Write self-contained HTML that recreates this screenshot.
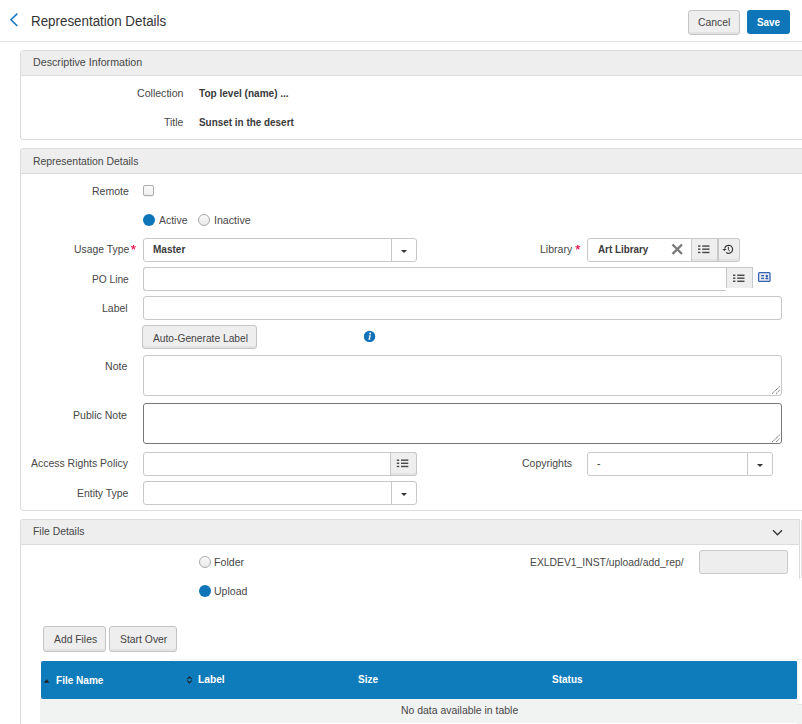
<!DOCTYPE html>
<html><head><meta charset="utf-8">
<style>
html,body{margin:0;padding:0;background:#fff;width:802px;height:724px;overflow:hidden;position:relative;font-family:"Liberation Sans",sans-serif}
.a{position:absolute;box-sizing:border-box}
.t{position:absolute;font-size:11.5px;line-height:14px;color:#474747;white-space:nowrap;transform-origin:0 0}
.r{text-align:right}
.b{font-weight:bold;font-size:11px;letter-spacing:-0.5px;color:#3a3a3a}
.ph{background:#eeeeee;border-bottom:1px solid #dcdcdc}
.pn{border:1px solid #dcdcdc;border-radius:3px;background:#fff}
.in{border:1px solid #c8c8c8;border-radius:3px;background:#fff}
.btn{border:1px solid #c4c4c4;border-radius:3px;background:#eeeeee;box-shadow:inset 0 -2px 0 #e3e3e3}
.star{color:#e8003a}
.car{position:absolute;width:0;height:0;border-left:3px solid transparent;border-right:3px solid transparent;border-top:3px solid #333}
</style></head>
<body>
<!-- header -->
<svg class="a" style="left:0;top:0" width="30" height="40"><polyline points="17.3,13.6 11,19.8 17.3,26" fill="none" stroke="#1979c2" stroke-width="1.6"/></svg>
<div class="a btn" style="left:688px;top:10px;width:52px;height:25px"></div>
<div class="a" style="left:747px;top:10px;width:43px;height:24px;background:#0e76b8;border-radius:3px"></div>
<div class="a" style="left:0;top:41px;width:802px;height:1px;background:#e3e3e3"></div>

<!-- panel 1 -->
<div class="a pn" style="left:20px;top:50px;width:800px;height:90px"></div>
<div class="a ph" style="left:21px;top:51px;width:800px;height:25px;border-radius:2px 0 0 0"></div>

<!-- panel 2 -->
<div class="a pn" style="left:20px;top:148px;width:800px;height:363px"></div>
<div class="a ph" style="left:21px;top:149px;width:800px;height:25px;border-radius:2px 0 0 0"></div>

<div class="a" style="left:143px;top:185px;width:11px;height:11px;border:1px solid #adadad;border-radius:2px;background:linear-gradient(#fafafa,#efefef);box-shadow:0 1px 1px rgba(0,0,0,0.07)"></div>

<div class="a" style="left:143px;top:214px;width:12px;height:12px;border-radius:50%;background:#0e76b8"></div>
<div class="a" style="left:198px;top:214px;width:12px;height:12px;border-radius:50%;border:1px solid #aaa;background:linear-gradient(#fafafa,#e8e8e8)"></div>

<div class="a in" style="left:143px;top:238px;width:274px;height:24px"></div>
<div class="a" style="left:391px;top:238px;width:1px;height:24px;background:#c8c8c8"></div>
<div class="car" style="left:401px;top:250px"></div>

<div class="a in" style="left:587px;top:238px;width:153px;height:24px"></div>
<svg class="a" style="left:671px;top:243px" width="13" height="13"><path d="M1.5,1.5 L11,11 M11,1.5 L1.5,11" stroke="#7a7a7a" stroke-width="2.4"/></svg>
<div class="a" style="left:691px;top:238px;width:49px;height:24px;background:#eeeeee;border:1px solid #c8c8c8;border-radius:0 3px 3px 0;box-shadow:inset 0 -2px 0 #e3e3e3"></div>
<div class="a" style="left:717px;top:239px;width:2px;height:22px;background:#c8c8c8"></div>

<div class="a" style="left:143px;top:267px;width:610px;height:24px;border:1px solid #c8c8c8;border-radius:3px 3px 0 3px;border-right:none"></div>
<div class="a" style="left:726px;top:267px;width:27px;height:21px;background:#eeeeee;border:1px solid #c8c8c8;border-bottom:none"></div>
<div class="a" style="left:726px;top:288px;width:27px;height:4px;background:#fff"></div>

<div class="a in" style="left:143px;top:296px;width:639px;height:24px"></div>

<div class="a btn" style="left:142px;top:325px;width:115px;height:24px"></div>
<div class="a" style="left:364px;top:331px;width:11px;height:11px;border-radius:50%;background:#1272b8"></div>

<div class="a in" style="left:143px;top:355px;width:639px;height:41px"></div>
<div class="a in" style="left:143px;top:403px;width:639px;height:41px;border-color:#777"></div>

<div class="a in" style="left:143px;top:452px;width:274px;height:24px"></div>
<div class="a" style="left:390px;top:452px;width:27px;height:24px;background:#eeeeee;border:1px solid #c8c8c8;border-radius:0 3px 3px 0;box-shadow:inset 0 -2px 0 #e3e3e3"></div>

<div class="a in" style="left:587px;top:452px;width:186px;height:24px"></div>
<div class="a" style="left:747px;top:452px;width:1px;height:24px;background:#c8c8c8"></div>
<div class="car" style="left:757px;top:464px"></div>

<div class="a in" style="left:143px;top:481px;width:274px;height:24px"></div>
<div class="a" style="left:391px;top:481px;width:1px;height:24px;background:#c8c8c8"></div>
<div class="car" style="left:401px;top:493px"></div>

<svg class="a" style="left:697px;top:243px" width="16" height="14" fill="#4a4a4a"><rect x="1.00" y="2.35" width="2.4" height="1.45"/><rect x="5.20" y="2.35" width="7.3" height="1.45"/><rect x="1.00" y="5.45" width="2.4" height="1.45"/><rect x="5.20" y="5.45" width="7.3" height="1.45"/><rect x="1.00" y="8.75" width="2.4" height="1.45"/><rect x="5.20" y="8.75" width="7.3" height="1.45"/></svg>
<svg class="a" style="left:732px;top:272px" width="16" height="14" fill="#4a4a4a"><rect x="1.00" y="2.55" width="2.4" height="1.45"/><rect x="5.20" y="2.55" width="7.3" height="1.45"/><rect x="1.00" y="5.45" width="2.4" height="1.45"/><rect x="5.20" y="5.45" width="7.3" height="1.45"/><rect x="1.00" y="8.55" width="2.4" height="1.45"/><rect x="5.20" y="8.55" width="7.3" height="1.45"/></svg>
<svg class="a" style="left:395px;top:457px" width="16" height="14" fill="#4a4a4a"><rect x="1.80" y="2.45" width="2.4" height="1.45"/><rect x="6.00" y="2.45" width="7.3" height="1.45"/><rect x="1.80" y="5.55" width="2.4" height="1.45"/><rect x="6.00" y="5.55" width="7.3" height="1.45"/><rect x="1.80" y="8.75" width="2.4" height="1.45"/><rect x="6.00" y="8.75" width="7.3" height="1.45"/></svg>
<svg class="a" style="left:719px;top:241px" width="20" height="18"><path d="M7.2,11.5 A4,4 0 1 0 5.7,7.6" fill="none" stroke="#333" stroke-width="1.15"/><polygon points="3.3,7.9 7.6,7.9 5.45,10.1" fill="#333"/><polyline points="9.4,5.8 9.4,8.9 10.8,10" fill="none" stroke="#333" stroke-width="0.95"/></svg>
<svg class="a" style="left:757px;top:271px" width="15" height="12"><rect x="1.6" y="1.6" width="11.4" height="8.8" rx="1" fill="#e8e8e8" stroke="#3564b8" stroke-width="1.3"/><rect x="4.2" y="4" width="2.8" height="1.2" fill="#3564b8"/><rect x="4.2" y="6.9" width="2.8" height="1.2" fill="#3564b8"/><rect x="4.4" y="5.2" width="2.4" height="1.45" fill="#9aaed8"/><circle cx="9.8" cy="5" r="1.2" fill="#2f62b8"/><rect x="8.4" y="7" width="2.8" height="1.2" fill="#2f62b8"/><rect x="9.4" y="5.5" width="0.9" height="2" fill="#2f62b8"/></svg>
<svg class="a" style="left:362px;top:329px" width="16" height="16"><circle cx="7.6" cy="7.4" r="5.6" fill="#1272b8"/><circle cx="8.2" cy="4.5" r="0.95" fill="#fff"/><path d="M6.9,6.4 L8.9,6.2 L7.9,10.2 L8.5,10.1 L8.3,10.8 L6.4,10.8 L7.2,7.1 L6.8,7.1 Z" fill="#fff"/></svg>
<svg class="a" style="left:760px;top:380px" width="24" height="70" fill="none" stroke="#555" stroke-width="1" stroke-dasharray="1.2,0.6"><path d="M12.1,13.6 L19.8,6.4 M16.2,13.6 L19.8,10"/><path d="M12.1,62 L19.8,54.8 M16.2,62 L19.8,58.4"/></svg>
<svg class="a" style="left:0;top:0" width="600" height="260"><path d="M133.40,247.30 L133.40,245.25 M133.40,247.30 L135.35,246.67 M133.40,247.30 L134.60,248.96 M133.40,247.30 L132.20,248.96 M133.40,247.30 L131.45,246.67 M577.80,247.30 L577.80,245.25 M577.80,247.30 L579.75,246.67 M577.80,247.30 L579.00,248.96 M577.80,247.30 L576.60,248.96 M577.80,247.30 L575.85,246.67 " stroke="#ec1350" stroke-width="1.1" stroke-linecap="round" fill="none"/></svg>
<!-- panel 3 -->
<div class="a pn" style="left:20px;top:519px;width:780px;height:260px;border-bottom:none;border-right:none;border-radius:3px 0 0 0"></div>
<div class="a" style="left:790px;top:519px;width:10px;height:60px;border-top:1px solid #dcdcdc;border-right:1px solid #dcdcdc;border-radius:0 3px 0 0"></div>
<div class="a ph" style="left:21px;top:520px;width:778px;height:25px;border-radius:2px 2px 0 0"></div>
<svg class="a" style="left:770px;top:527px" width="15" height="12"><polyline points="3,3.3 7.5,7.8 12,3.3" fill="none" stroke="#333" stroke-width="1.25"/></svg>

<div class="a" style="left:199px;top:556px;width:12px;height:12px;border-radius:50%;border:1px solid #aaa;background:linear-gradient(#fafafa,#e8e8e8)"></div>
<div class="a" style="left:699px;top:550px;width:89px;height:24px;background:#eeeeee;border:1px solid #c8c8c8;border-radius:3px"></div>
<div class="a" style="left:199px;top:585px;width:12px;height:12px;border-radius:50%;background:#0e76b8"></div>

<div class="a btn" style="left:43px;top:626px;width:63px;height:26px"></div>
<div class="a btn" style="left:109px;top:626px;width:68px;height:26px"></div>

<div class="a" style="left:41px;top:661px;width:756px;height:38px;background:#0e7bbb;border-radius:2px 1px 1px 2px"></div>
<div class="a" style="left:40px;top:699px;width:757px;height:24px;background:#f1f2f2"></div>
<svg class="a" style="left:40px;top:670px" width="160" height="20"><polygon points="3.9,12.7 9.4,12.7 6.65,9.2" fill="#222"/><polyline points="147.2,9.2 149.45,7 151.7,9.2" fill="none" stroke="#222" stroke-width="1.1"/><polyline points="147.2,10.7 149.45,12.9 151.7,10.7" fill="none" stroke="#222" stroke-width="1.1"/></svg>
<div class="a" style="left:171px;top:659px;width:631px;height:1px;background:#f3f3f3"></div>
<div class="a" style="left:801px;top:520px;width:1px;height:58px;background:#e2e2e2"></div>
<div class="a" style="left:797px;top:704px;width:5px;height:20px;background:#f1f2f2;border-top:1px solid #e6e6e6"></div>
<div class="a" style="left:797px;top:660px;width:1px;height:44px;background:#f0f0f0"></div>
<div class="t" style="left:31.11px;top:13px;transform:scaleX(0.9545);font-size:14px;line-height:16px;color:#333">Representation Details</div>
<div class="t" style="left:698.03px;top:15px;transform:scaleX(0.9042);color:#444">Cancel</div>
<div class="t" style="left:757.11px;top:15px;transform:scaleX(0.8582);font-weight:bold;color:#fff">Save</div>
<div class="t" style="left:32.91px;top:55px;transform:scaleX(0.9285);color:#474747">Descriptive Information</div>
<div class="t" style="left:136.82px;top:86px;transform:scaleX(0.9202);color:#474747">Collection</div>
<div class="t" style="left:198.71px;top:86px;transform:scaleX(0.8732);font-weight:bold;color:#3a3a3a">Top level (name) ...</div>
<div class="t" style="left:163.84px;top:115px;transform:scaleX(0.9078);color:#474747">Title</div>
<div class="t" style="left:198.51px;top:115px;transform:scaleX(0.8624);font-weight:bold;color:#3a3a3a">Sunset in the desert</div>
<div class="t" style="left:32.63px;top:154px;transform:scaleX(0.9055);color:#474747">Representation Details</div>
<div class="t" style="left:91.62px;top:184px;transform:scaleX(0.9150);color:#474747">Remote</div>
<div class="t" style="left:158.71px;top:213px;transform:scaleX(0.9092);color:#474747">Active</div>
<div class="t" style="left:214.16px;top:213px;transform:scaleX(0.9237);color:#474747">Inactive</div>
<div class="t" style="left:73.55px;top:242px;transform:scaleX(0.9020);color:#474747">Usage Type</div>
<div class="t" style="left:152.93px;top:242px;transform:scaleX(0.8713);font-weight:bold;color:#3a3a3a">Master</div>
<div class="t" style="left:540.22px;top:242px;transform:scaleX(0.9149);color:#474747">Library</div>
<div class="t" style="left:597.57px;top:242px;transform:scaleX(0.8542);font-weight:bold;color:#3a3a3a">Art Library</div>
<div class="t" style="left:91.85px;top:272px;transform:scaleX(0.8835);color:#474747">PO Line</div>
<div class="t" style="left:102.12px;top:301px;transform:scaleX(0.9133);color:#474747">Label</div>
<div class="t" style="left:152.51px;top:331px;transform:scaleX(0.8900);color:#444">Auto-Generate Label</div>
<div class="t" style="left:104.92px;top:359px;transform:scaleX(0.9190);color:#474747">Note</div>
<div class="t" style="left:73.22px;top:408px;transform:scaleX(0.9181);color:#474747">Public Note</div>
<div class="t" style="left:31.01px;top:456px;transform:scaleX(0.9089);color:#474747">Access Rights Policy</div>
<div class="t" style="left:522.12px;top:456px;transform:scaleX(0.9114);color:#474747">Copyrights</div>
<div class="t" style="left:597.42px;top:456px;transform:scaleX(0.9078);color:#333">-</div>
<div class="t" style="left:76.93px;top:486px;transform:scaleX(0.9065);color:#474747">Entity Type</div>
<div class="t" style="left:32.83px;top:524px;transform:scaleX(0.9037);color:#474747">File Details</div>
<div class="t" style="left:213.91px;top:555px;transform:scaleX(0.9237);color:#474747">Folder</div>
<div class="t" style="left:530.03px;top:555px;transform:scaleX(0.8998);color:#474747">EXLDEV1_INST/upload/add_rep/</div>
<div class="t" style="left:213.94px;top:584px;transform:scaleX(0.9152);color:#474747">Upload</div>
<div class="t" style="left:53.71px;top:632px;transform:scaleX(0.8979);color:#444">Add Files</div>
<div class="t" style="left:119.93px;top:632px;transform:scaleX(0.9029);color:#444">Start Over</div>
<div class="t" style="left:55.73px;top:673px;transform:scaleX(0.8727);font-weight:bold;color:#fff">File Name</div>
<div class="t" style="left:197.62px;top:672px;transform:scaleX(0.8880);font-weight:bold;color:#fff">Label</div>
<div class="t" style="left:357.80px;top:672px;transform:scaleX(0.8739);font-weight:bold;color:#fff">Size</div>
<div class="t" style="left:552.41px;top:672px;transform:scaleX(0.8690);font-weight:bold;color:#fff">Status</div>
<div class="t" style="left:401.03px;top:703px;transform:scaleX(0.9076);color:#474747">No data available in table</div>
</body></html>
